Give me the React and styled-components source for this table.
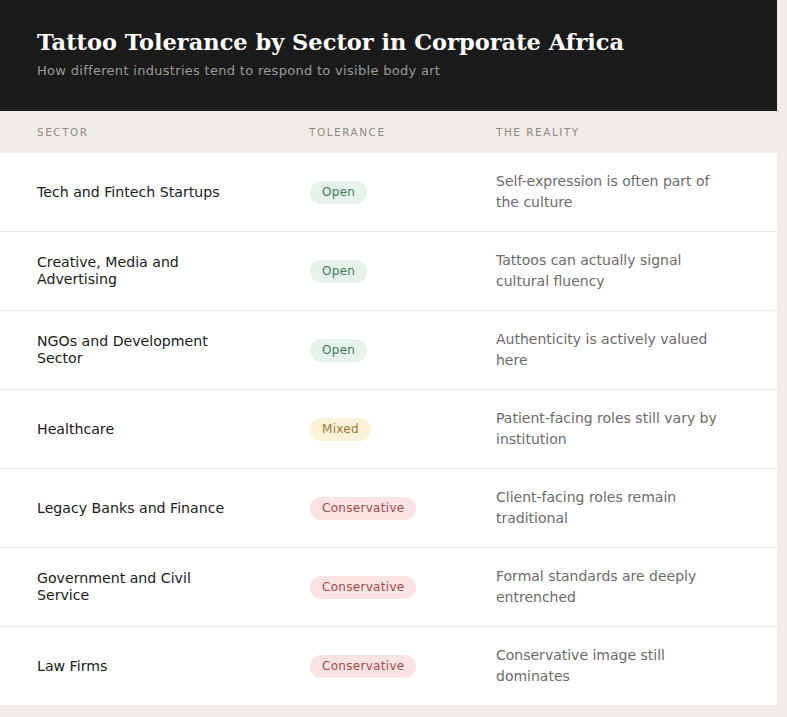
import React from 'react';
import styled, { createGlobalStyle } from 'styled-components';

const GlobalStyle = createGlobalStyle`
  body {
    margin: 0;
    background: #f0ede8;
    font-family: "DejaVu Sans", sans-serif;
  }
`;

const Card = styled.div`
  width: 777px;
  background: #ffffff;
`;

const Header = styled.header`
  background: #1c1b1b;
  padding: 27px 37px 32px;
`;

const Title = styled.h1`
  margin: 0;
  font-family: "DejaVu Serif", serif;
  font-weight: bold;
  font-size: 22.5px;
  line-height: 30px;
  color: #ffffff;
`;

const Subtitle = styled.p`
  margin: 6px 0 0;
  font-size: 13px;
  letter-spacing: 0.3px;
  line-height: 16px;
  color: #9a9a9a;
`;

const Row = styled.div`
  display: grid;
  grid-template-columns: 272px 187px 1fr;
  align-items: center;
  border-bottom: 1px solid #ebe8e3;
  &:last-child {
    border-bottom: none;
  }
`;

const HeadRow = styled(Row)`
  background: #f0ede8;
  height: 42px;
  border-bottom: none;
`;

const HeadCell = styled.div`
  padding: 0 37px;
  font-size: 10.5px;
  letter-spacing: 1.5px;
  text-transform: uppercase;
  color: #8c8884;
`;

const Cell = styled.div`
  padding: 18px 37px;
`;

const SectorCell = styled(Cell)`
  font-size: 14.15px;
  line-height: 17px;
  color: #1a1a1a;
  padding-right: 40px;
`;

const RealityCell = styled(Cell)`
  font-size: 14px;
  line-height: 21px;
  color: #6b6b6b;
  padding-right: 48px;
`;

const BadgeCell = styled(Cell)`
  padding-left: 38px;
`;

const tones = {
  Open: { bg: '#e6f3eb', fg: '#3f7a55' },
  Mixed: { bg: '#fcf1d9', fg: '#9a7a34' },
  Conservative: { bg: '#fbe3e3', fg: '#a34a4a' },
};

const Badge = styled.span`
  display: inline-block;
  padding: 4px 12px;
  border-radius: 12px;
  font-size: 12px;
  letter-spacing: 0.3px;
  line-height: 15px;
  background: ${p => tones[p.$level].bg};
  color: ${p => tones[p.$level].fg};
`;

const rows = [
  ['Tech and Fintech Startups', 'Open', 'Self-expression is often part of the culture'],
  ['Creative, Media and Advertising', 'Open', 'Tattoos can actually signal cultural fluency'],
  ['NGOs and Development Sector', 'Open', 'Authenticity is actively valued here'],
  ['Healthcare', 'Mixed', 'Patient-facing roles still vary by institution'],
  ['Legacy Banks and Finance', 'Conservative', 'Client-facing roles remain traditional'],
  ['Government and Civil Service', 'Conservative', 'Formal standards are deeply entrenched'],
  ['Law Firms', 'Conservative', 'Conservative image still dominates'],
];

export default function App() {
  return (
    <>
      <GlobalStyle />
      <Card>
        <Header>
          <Title>Tattoo Tolerance by Sector in Corporate Africa</Title>
          <Subtitle>How different industries tend to respond to visible body art</Subtitle>
        </Header>
        <HeadRow>
          <HeadCell>Sector</HeadCell>
          <HeadCell>Tolerance</HeadCell>
          <HeadCell>The Reality</HeadCell>
        </HeadRow>
        {rows.map(([sector, level, reality]) => (
          <Row key={sector}>
            <SectorCell>{sector}</SectorCell>
            <BadgeCell><Badge $level={level}>{level}</Badge></BadgeCell>
            <RealityCell>{reality}</RealityCell>
          </Row>
        ))}
      </Card>
    </>
  );
}
